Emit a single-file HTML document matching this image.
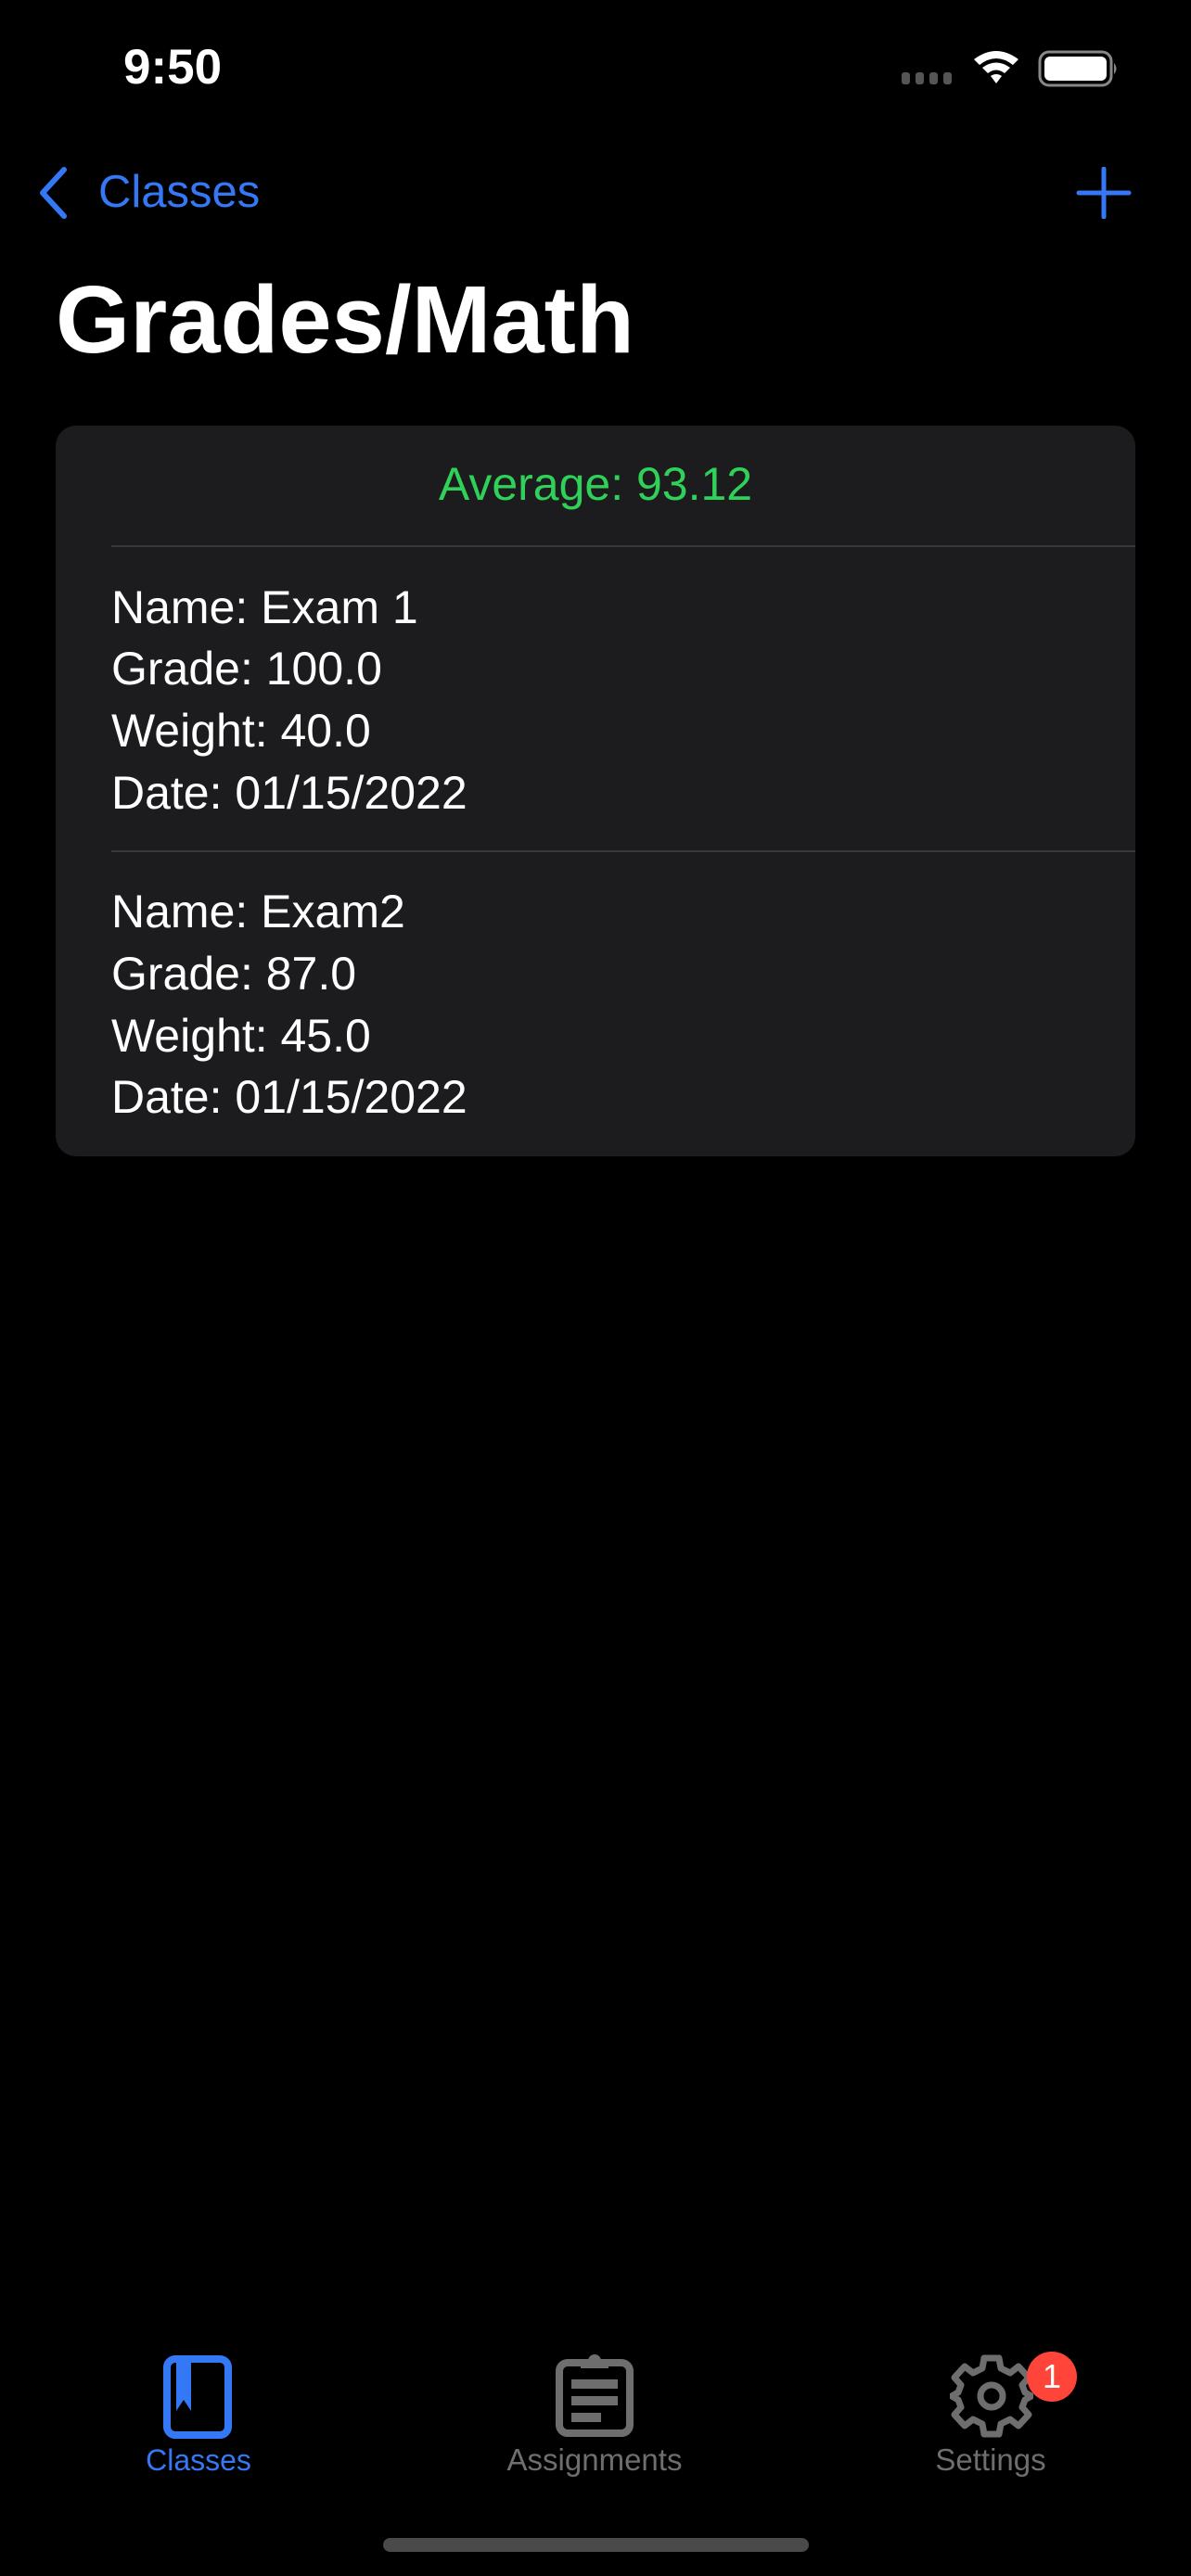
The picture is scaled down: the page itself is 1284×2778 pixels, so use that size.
<!DOCTYPE html>
<html><head><meta charset="utf-8"><style>
html,body{margin:0;padding:0;background:#000;}
body{width:1284px;height:2778px;position:relative;overflow:hidden;font-family:"Liberation Sans",sans-serif;color:#fff;}
.abs{position:absolute;}
.line{position:absolute;left:120px;font-size:50px;line-height:67px;white-space:nowrap;}
</style></head><body>
<div class="abs" style="left:133px;top:42px;font-size:53px;font-weight:bold;line-height:62px;">9:50</div>
<svg class="abs" style="left:970px;top:50px" width="240" height="50" viewBox="0 0 240 50">
 <g fill="#555"><rect x="2" y="28" width="9" height="13" rx="3"/><rect x="17" y="28" width="9" height="13" rx="3"/><rect x="32" y="28" width="9" height="13" rx="3"/><rect x="47" y="28" width="9" height="13" rx="3"/></g>
 <g fill="#fff"><path d="M80 14 Q104 -4 128 14 L122 20 Q104 6 86 20Z"/><path d="M89 23 Q104 12 119 23 L113 29 Q104 22 95 29Z"/><path d="M98 32 Q104 28 110 32 L104 40Z"/></g>
 <rect x="151" y="6" width="77" height="36" rx="10" fill="none" stroke="#888" stroke-width="3"/>
 <rect x="156" y="11" width="67" height="26" rx="6" fill="#fff"/>
 <path d="M231 18 q5 6 0 12z" fill="#888"/>
</svg>
<svg class="abs" style="left:36px;top:178px" width="44" height="60"><path d="M33 5 L10 30 L33 55" fill="none" stroke="#3478f6" stroke-width="6" stroke-linecap="round" stroke-linejoin="round"/></svg>
<div class="abs" style="left:106px;top:177px;font-size:49px;line-height:60px;color:#3478f6;">Classes</div>
<svg class="abs" style="left:1160px;top:180px" width="60" height="56"><path d="M30 2 V54 M3 28 H57" stroke="#3478f6" stroke-width="5" stroke-linecap="round"/></svg>
<div class="abs" style="left:60px;top:290px;font-size:103px;font-weight:bold;line-height:110px;">Grades/Math</div>
<div class="abs" style="left:60px;top:459px;width:1164px;height:788px;background:#1c1c1e;border-radius:22px;"></div>
<div class="abs" style="left:60px;top:490px;width:1164px;text-align:center;font-size:50px;line-height:64px;color:#30d158;">Average: 93.12</div>
<div class="abs" style="left:120px;top:588px;width:1104px;height:2px;background:#38383a;"></div>
<div class="line" style="top:622px">Name: Exam 1</div>
<div class="line" style="top:688px">Grade: 100.0</div>
<div class="line" style="top:755px">Weight: 40.0</div>
<div class="line" style="top:822px">Date: 01/15/2022</div>
<div class="abs" style="left:120px;top:917px;width:1104px;height:2px;background:#38383a;"></div>
<div class="line" style="top:950px">Name: Exam2</div>
<div class="line" style="top:1017px">Grade: 87.0</div>
<div class="line" style="top:1084px">Weight: 45.0</div>
<div class="line" style="top:1150px">Date: 01/15/2022</div>
<svg class="abs" style="left:176px;top:2540px" width="76" height="90" viewBox="0 0 76 90"><rect x="4" y="4" width="66" height="82" rx="9" fill="none" stroke="#3478f6" stroke-width="8"/><path d="M14 6 V60 L22 48 L30 60 V6Z" fill="#3478f6"/></svg>
<svg class="abs" style="left:598px;top:2536px" width="86" height="92" viewBox="0 0 86 92"><rect x="5" y="12" width="76" height="76" rx="9" fill="none" stroke="#6e6e6e" stroke-width="8"/><circle cx="43" cy="10" r="7" fill="#6e6e6e"/><rect x="28" y="8" width="30" height="10" fill="#6e6e6e"/><rect x="18" y="30" width="50" height="10" fill="#6e6e6e"/><rect x="18" y="48" width="50" height="10" fill="#6e6e6e"/><rect x="18" y="66" width="32" height="10" fill="#6e6e6e"/></svg>
<svg class="abs" style="left:1024px;top:2538px" width="90" height="92" viewBox="-45 -46 90 92"><g fill="none" stroke="#6e6e6e" stroke-width="7"><circle r="12"/><path d="M-8 -41 H8 L10 -30 L20 -25 L29 -32 L40 -20 L33 -12 L36 -4 L43 0 L36 4 L33 12 L40 20 L29 32 L20 25 L10 30 L8 41 H-8 L-10 30 L-20 25 L-29 32 L-40 20 L-33 12 L-36 4 L-43 0 L-36 -4 L-33 -12 L-40 -20 L-29 -32 L-20 -25 L-10 -30Z" stroke-linejoin="round"/></g></svg>
<div class="abs" style="left:1107px;top:2536px;width:54px;height:54px;border-radius:27px;background:#ff453a;color:#fff;font-size:36px;line-height:54px;text-align:center;">1</div>
<div class="abs" style="left:114px;top:2634px;width:200px;text-align:center;font-size:32px;line-height:38px;color:#3478f6;">Classes</div>
<div class="abs" style="left:541px;top:2634px;width:200px;text-align:center;font-size:33px;line-height:38px;color:#6e6e6e;">Assignments</div>
<div class="abs" style="left:968px;top:2634px;width:200px;text-align:center;font-size:33px;line-height:38px;color:#6e6e6e;">Settings</div>
<div class="abs" style="left:413px;top:2737px;width:459px;height:15px;border-radius:8px;background:#4a4a4a;"></div>
</body></html>
